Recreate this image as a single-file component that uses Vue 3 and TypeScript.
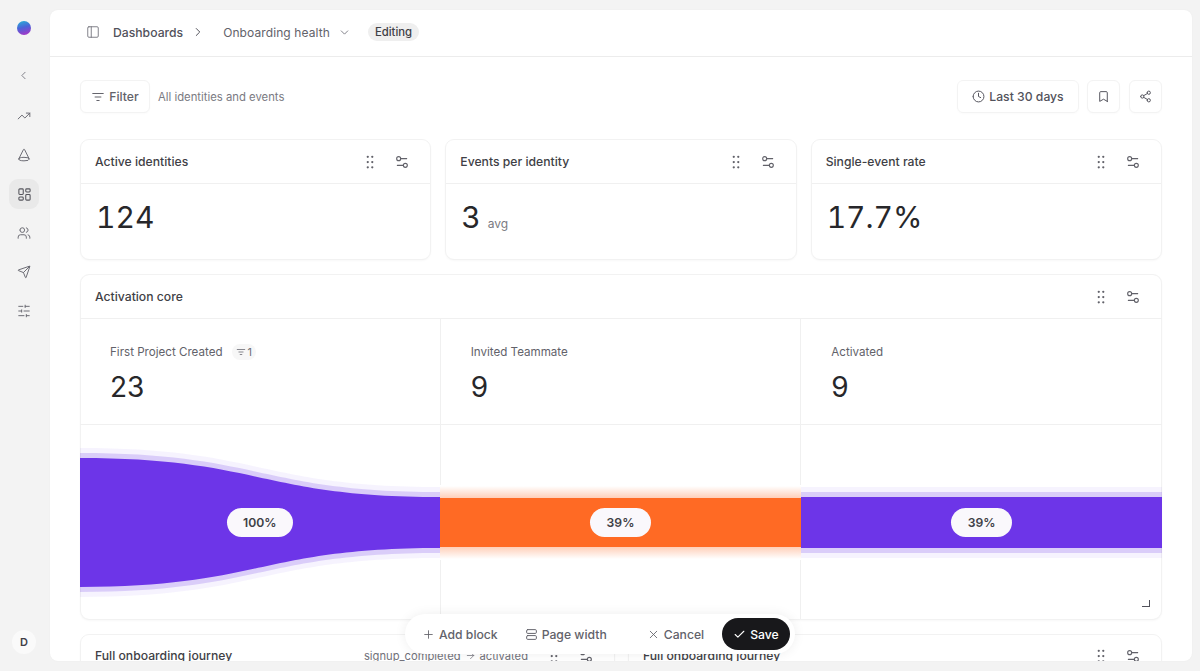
<script setup lang="ts">
import { h } from 'vue';

const box = (x: number, y: number, w: number, h2: number, r = 1.5) =>
    `M${x + r} ${y}h${w - 2 * r}a${r} ${r} 0 0 1 ${r} ${r}v${h2 - 2 * r}a${r} ${r} 0 0 1-${r} ${r}h-${w - 2 * r}a${r} ${r} 0 0 1-${r}-${r}v-${h2 - 2 * r}a${r} ${r} 0 0 1 ${r}-${r}z`;
const circle = (cx: number, cy: number, r: number) =>
    `M${cx - r} ${cy}a${r} ${r} 0 1 0 ${2 * r} 0a${r} ${r} 0 1 0-${2 * r} 0`;

const icons: Record<string, string[]> = {
    panel: [box(3, 3, 18, 18, 2), 'M9 3v18'],
    right: ['m9 18 6-6-6-6'],
    down: ['m6 9 6 6 6-6'],
    left: ['m15 18-6-6 6-6'],
    trend: ['M22 7 13.5 15.5 8.5 10.5 2 17', 'M16 7h6v6'],
    cone: ['m20.9 18.55-8-15.98a1 1 0 0 0-1.8 0l-8 15.98', 'M3 19a9 3 0 1 0 18 0a9 3 0 1 0-18 0'],
    dash: [box(3, 3, 7, 9), box(14, 3, 7, 5), box(14, 12, 7, 9), box(3, 16, 7, 5)],
    users: ['M16 21v-2a4 4 0 0 0-4-4H6a4 4 0 0 0-4 4v2', circle(9, 7, 4), 'M22 21v-2a4 4 0 0 0-3-3.87', 'M16 3.13a4 4 0 0 1 0 7.75'],
    send: ['M14.536 21.686a.5.5 0 0 0 .937-.024l6.5-19a.496.496 0 0 0-.635-.635l-19 6.5a.5.5 0 0 0-.024.937l7.93 3.18a2 2 0 0 1 1.112 1.11z', 'm21.854 2.147-10.94 10.939'],
    tune: ['M21 4h-7', 'M10 4H3', 'M21 12h-9', 'M8 12H3', 'M21 20h-5', 'M12 20H3', 'M14 2v4', 'M8 10v4', 'M16 18v4'],
    filter: ['M3 6h18', 'M7 12h10', 'M10 18h4'],
    clock: [circle(12, 12, 10), 'M12 6v6l4 2'],
    bookmark: ['m19 21-7-4-7 4V5a2 2 0 0 1 2-2h10a2 2 0 0 1 2 2v16z'],
    share: [circle(18, 5, 3), circle(6, 12, 3), circle(18, 19, 3), 'M8.59 13.51l6.83 3.98', 'M15.41 6.51l-6.82 3.98'],
    grip: ['M9 5h.01', 'M15 5h.01', 'M9 12h.01', 'M15 12h.01', 'M9 19h.01', 'M15 19h.01'],
    settings: ['M14 17H5', 'M19 7h-9', circle(17, 17, 3), circle(7, 7, 3)],
    plus: ['M5 12h14', 'M12 5v14'],
    rows: [box(3, 3, 18, 7, 2), box(3, 14, 18, 7, 2)],
    close: ['M18 6 6 18', 'm6 6 12 12'],
    check: ['M20 6 9 17l-5-5'],
    arrow: ['M5 12h14', 'm12 5 7 7-7 7'],
};

const Icon = (props: { name: string; size?: number; weight?: number }) =>
    h(
        'svg',
        {
            width: props.size ?? 14,
            height: props.size ?? 14,
            viewBox: '0 0 24 24',
            fill: 'none',
            stroke: 'currentColor',
            'stroke-width': props.weight ?? 2,
            'stroke-linecap': 'round',
            'stroke-linejoin': 'round',
            style: 'flex:none;display:block',
        },
        icons[props.name].map((d) => h('path', { d })),
    );

const navItems = ['trend', 'cone', 'dash', 'users', 'send', 'tune'];

const statCards = [
    { title: 'Active identities', value: '124', unit: '' },
    { title: 'Events per identity', value: '3', unit: 'avg' },
    { title: 'Single-event rate', value: '17.7%', unit: '' },
];

const steps = [
    { label: 'First Project Created', value: '23', filters: 1, rate: '100%' },
    { label: 'Invited Teammate', value: '9', filters: 0, rate: '39%' },
    { label: 'Activated', value: '9', filters: 0, rate: '39%' },
];

// funnel drawn in chart coordinates, 1082 x 195
const flow = (spread: number) =>
    `M0 ${33 - spread}C180 ${33 - spread} 180 ${72 - spread} 360 ${72 - spread}H1082V${123 + spread}H360C180 ${123 + spread} 180 ${162 + spread} 0 ${162 + spread}Z`;
</script>

<template>
    <div class="shell">
        <aside class="sidebar">
            <span class="logo"></span>
            <span class="collapse"><Icon name="left" :size="13" :weight="1.6" /></span>
            <nav class="nav">
                <span v-for="item in navItems" :key="item" class="nav-item" :class="{ active: item === 'dash' }">
                    <Icon :name="item" :size="item === 'dash' ? 15 : 14" :weight="1.7" />
                </span>
            </nav>
            <span class="avatar">D</span>
        </aside>

        <main class="panel">
            <header class="topbar">
                <span class="panel-toggle"><Icon name="panel" :size="14" :weight="1.5" /></span>
                <span class="crumb">Dashboards</span>
                <span class="crumb-sep"><Icon name="right" :size="14" :weight="1.7" /></span>
                <span class="crumb-page">Onboarding health</span>
                <span class="crumb-down"><Icon name="down" :size="13" :weight="1.6" /></span>
                <span class="status">Editing</span>
            </header>

            <div class="content">
                <div class="filters">
                    <button class="btn filter-btn"><Icon name="filter" :size="14" :weight="1.7" />Filter</button>
                    <span class="filter-note">All identities and events</span>
                    <button class="btn range-btn"><Icon name="clock" :size="13" :weight="1.8" />Last 30 days</button>
                    <button class="btn square"><Icon name="bookmark" :size="13" :weight="1.8" /></button>
                    <button class="btn square"><Icon name="share" :size="13" :weight="1.8" /></button>
                </div>

                <section class="stats">
                    <article v-for="card in statCards" :key="card.title" class="card">
                        <div class="card-head">
                            <span class="card-title">{{ card.title }}</span>
                            <span class="card-tools">
                                <Icon name="grip" :size="18" :weight="3" />
                                <Icon name="settings" :size="16" :weight="1.7" />
                            </span>
                        </div>
                        <div class="stat-body">
                            <span class="stat-value">{{ card.value }}</span>
                            <span v-if="card.unit" class="stat-unit">{{ card.unit }}</span>
                        </div>
                    </article>
                </section>

                <section class="card funnel-card">
                    <div class="card-head">
                        <span class="card-title">Activation core</span>
                        <span class="card-tools">
                            <Icon name="grip" :size="18" :weight="3" />
                            <Icon name="settings" :size="16" :weight="1.7" />
                        </span>
                    </div>
                    <div class="steps">
                        <div v-for="step in steps" :key="step.label" class="step">
                            <div class="step-label">
                                {{ step.label }}
                                <span v-if="step.filters" class="step-filter"><Icon name="filter" :size="10" :weight="2" />{{ step.filters }}</span>
                            </div>
                            <div class="step-value">{{ step.value }}</div>
                        </div>
                    </div>
                    <div class="chart">
                        <svg class="chart-art" width="1082" height="195" viewBox="0 0 1082 195">
                            <defs>
                                <linearGradient id="glowTop" x1="0" y1="0" x2="0" y2="1">
                                    <stop offset="0" stop-color="#ff6a24" stop-opacity="0" />
                                    <stop offset="1" stop-color="#ff6a24" stop-opacity="0.32" />
                                </linearGradient>
                                <linearGradient id="glowBottom" x1="0" y1="0" x2="0" y2="1">
                                    <stop offset="0" stop-color="#ff6a24" stop-opacity="0.32" />
                                    <stop offset="1" stop-color="#ff6a24" stop-opacity="0" />
                                </linearGradient>
                            </defs>
                            <path :d="flow(10)" fill="#6d35e8" opacity="0.06" />
                            <path :d="flow(5)" fill="#6d35e8" opacity="0.2" />
                            <path :d="flow(0)" fill="#6d35e8" />
                            <rect x="360" y="60" width="361" height="75" fill="#fff" />
                            <rect x="360" y="61" width="361" height="12" fill="url(#glowTop)" />
                            <rect x="360" y="122" width="361" height="12" fill="url(#glowBottom)" />
                            <rect x="360" y="73" width="361" height="49" fill="#ff6a24" />
                        </svg>
                        <div v-for="step in steps" :key="step.label" class="chart-col">
                            <span class="rate">{{ step.rate }}</span>
                        </div>
                        <span class="resize"></span>
                    </div>
                </section>

                <section class="lower">
                    <article class="card lower-card">
                        <div class="card-head">
                            <span class="card-title">Full onboarding journey</span>
                            <span class="card-tools">
                                <span class="event-chip">signup_completed<Icon name="arrow" :size="11" :weight="1.6" />activated</span>
                                <Icon name="grip" :size="18" :weight="3" />
                                <Icon name="settings" :size="16" :weight="1.7" />
                            </span>
                        </div>
                    </article>
                    <article class="card lower-card">
                        <div class="card-head">
                            <span class="card-title">Full onboarding journey</span>
                            <span class="card-tools">
                                <Icon name="grip" :size="18" :weight="3" />
                                <Icon name="settings" :size="16" :weight="1.7" />
                            </span>
                        </div>
                    </article>
                </section>
            </div>

            <div class="toolbar">
                <button class="tool add"><Icon name="plus" :size="13" :weight="1.6" />Add block</button>
                <button class="tool width"><Icon name="rows" :size="13" :weight="1.8" />Page width</button>
                <button class="tool cancel"><Icon name="close" :size="13" :weight="1.6" />Cancel</button>
                <button class="save"><Icon name="check" :size="13" :weight="2" />Save</button>
            </div>
        </main>
    </div>
</template>

<style>
html,
body {
    margin: 0;
    height: 100%;
    overflow: hidden;
    background: #f3f3f3;
}
</style>

<style scoped>
.shell {
    display: flex;
    height: 671px;
    box-sizing: border-box;
    padding: 10px 8px 10px 0;
    font-family: Inter, "Liberation Sans", sans-serif;
    font-size: 12.2px;
    color: #3f3f46;
    background: #f3f3f3;
}

.sidebar {
    flex: none;
    width: 50px;
    padding-left: 9px;
    box-sizing: border-box;
    display: flex;
    flex-direction: column;
    align-items: flex-start;
}

.logo {
    width: 14px;
    height: 14px;
    margin: 11px 0 0 8px;
    border-radius: 50%;
    background: linear-gradient(165deg, #25b5d6 0%, #4a63d8 45%, #b52ec4 100%);
}

.collapse {
    margin: 34px 0 0 8px;
    height: 14px;
    color: #71717a;
}

.nav {
    display: flex;
    flex-direction: column;
    gap: 9px;
    margin-top: 18px;
}

.nav-item {
    width: 30px;
    height: 30px;
    display: flex;
    align-items: center;
    justify-content: center;
    border-radius: 9px;
    color: #6b6b73;
}

.nav-item.active {
    background: #e9e9e9;
    color: #55555c;
}

.avatar {
    margin: auto 0 7px 3px;
    width: 24px;
    height: 24px;
    border-radius: 50%;
    background: #fafafa;
    display: flex;
    align-items: center;
    justify-content: center;
    font-size: 11px;
    font-weight: 600;
    color: #3f3f46;
}

.panel {
    position: relative;
    flex: 1;
    min-width: 0;
    display: flex;
    flex-direction: column;
    background: #fff;
    border-radius: 8px;
    overflow: hidden;
    box-shadow: 0 0 2px rgba(0, 0, 0, 0.04);
}

.topbar {
    flex: none;
    height: 47px;
    box-sizing: border-box;
    display: flex;
    align-items: center;
    padding: 0 36px 2px;
    border-bottom: 1px solid #ececec;
}

.panel-toggle {
    color: #71717a;
    margin-right: 13px;
}

.crumb {
    font-weight: 500;
    color: #52525b;
}

.crumb-sep {
    margin: 0 18px 0 8px;
    color: #52525b;
}

.crumb-page {
    font-size: 12px;
    color: #62626a;
    letter-spacing: 0.1px;
}

.crumb-down {
    margin: 0 17px 0 8px;
    color: #71717a;
}

.status {
    padding: 2px 7px;
    border-radius: 10px;
    background: #efefef;
    font-size: 11.3px;
    font-weight: 500;
    color: #3f3f46;
}

.content {
    flex: 1;
    min-height: 0;
    overflow: hidden;
    padding: 23px 30px 0;
}

.filters {
    display: flex;
    align-items: center;
    height: 33px;
    margin-bottom: 26px;
}

.btn {
    height: 33px;
    box-sizing: border-box;
    display: flex;
    align-items: center;
    justify-content: center;
    gap: 4px;
    padding: 0;
    border: 1px solid #f3f3f3;
    border-radius: 6px;
    background: #fff;
    font: inherit;
    color: #52525b;
    box-shadow: 0 1px 2px rgba(0, 0, 0, 0.02);
}

.filter-btn {
    width: 70px;
    font-weight: 500;
    color: #62626a;
}

.filter-note {
    margin-left: 8px;
    font-size: 11.3px;
    color: #7a7a82;
}

.range-btn {
    width: 122px;
    margin-left: auto;
    gap: 4px;
    font-weight: 500;
    color: #52525b;
}

.square {
    width: 33px;
    margin-left: 9px;
}

.range-btn + .square {
    margin-left: 8px;
}

.stats {
    display: grid;
    grid-template-columns: repeat(3, 1fr);
    gap: 14px;
    margin-bottom: 14px;
}

.card {
    box-sizing: border-box;
    background: #fff;
    border: 1px solid #f2f2f2;
    border-radius: 9px;
    box-shadow: 0 1px 2px rgba(0, 0, 0, 0.03);
}

.card-head {
    height: 44px;
    box-sizing: border-box;
    display: flex;
    align-items: center;
    justify-content: space-between;
    padding: 0 20px 0 14px;
    border-bottom: 1px solid #f0f0f0;
}

.card-title {
    font-weight: 500;
    color: #3f3f46;
}

.card-tools {
    display: flex;
    align-items: center;
    gap: 15px;
    color: #62626a;
}

.stat-body {
    height: 75px;
    display: flex;
    align-items: baseline;
    gap: 4px;
    padding: 14px 15px 0;
    box-sizing: border-box;
}

.stat-value {
    font-size: 30px;
    line-height: 38px;
    font-variant-numeric: tabular-nums;
    color: #27272a;
}

.stat-unit {
    margin-left: 3px;
    font-size: 12px;
    color: #7a7a82;
}

/* the chart runs edge to edge, so the side lines are shadows under it */
.funnel-card {
    height: 346px;
    margin-bottom: 14px;
    overflow: hidden;
    border-width: 1px 0;
    box-shadow: inset 1px 0 #f2f2f2, inset -1px 0 #f2f2f2, 0 1px 2px rgba(0, 0, 0, 0.03);
}

.funnel-card .card-head {
    padding: 0 21px 0 15px;
}

.steps {
    display: grid;
    grid-template-columns: repeat(3, 1fr);
    height: 105px;
    border-bottom: 1px solid #f0f0f0;
}

.step {
    padding: 24px 30px 0;
    border-right: 1px solid #f0f0f0;
}

.step:last-child {
    border-right: 0;
}

.step-label {
    display: flex;
    align-items: center;
    gap: 9px;
    height: 18px;
    font-size: 11.6px;
    color: #62626a;
}

.step-filter {
    display: flex;
    align-items: center;
    gap: 2px;
    padding: 1px 4px;
    border-radius: 8px;
    background: #f7f7f7;
    font-size: 11px;
    color: #71717a;
}

.step-value {
    margin-top: 9px;
    font-size: 28px;
    line-height: 34px;
    color: #27272a;
}

.chart {
    position: relative;
    display: grid;
    grid-template-columns: repeat(3, 1fr);
    height: 195px;
}

.chart-art {
    position: absolute;
    left: 0;
    top: 0;
    z-index: 1;
}

.chart-col {
    display: flex;
    align-items: center;
    justify-content: center;
    border-right: 1px solid #f0f0f0;
}

.chart-col:last-of-type {
    border-right: 0;
}

.rate {
    position: relative;
    z-index: 2;
    height: 29px;
    display: flex;
    align-items: center;
    padding: 0 16.5px;
    border-radius: 15px;
    background: #faf8fc;
    font-weight: 600;
    color: #3f3f46;
}

.resize {
    position: absolute;
    right: 12px;
    bottom: 13px;
    width: 7px;
    height: 6px;
    border-right: 1.5px solid #52525b;
    border-bottom: 1.5px solid #52525b;
}

.lower {
    display: grid;
    grid-template-columns: 535px 1fr;
    gap: 13px;
}

.lower-card {
    height: 120px;
}

.lower-card .card-head {
    padding-bottom: 2px;
}

.event-chip {
    display: flex;
    align-items: center;
    gap: 4px;
    font-size: 11.2px;
    color: #71717a;
    margin-right: 2px;
}

.toolbar {
    position: absolute;
    left: 355px;
    bottom: 7px;
    width: 390px;
    height: 40px;
    box-sizing: border-box;
    display: flex;
    align-items: center;
    padding: 0 5px 0 17px;
    border-radius: 20px;
    background: #fff;
    box-shadow: 0 0 12px rgba(0, 0, 0, 0.07);
}

.tool {
    display: flex;
    align-items: center;
    gap: 4px;
    padding: 0;
    border: 0;
    background: none;
    font: inherit;
    font-weight: 500;
    color: #62626a;
}

.width {
    margin-left: 27px;
}

.cancel {
    margin-left: 40px;
}

.save {
    margin-left: auto;
    width: 68px;
    height: 32px;
    display: flex;
    align-items: center;
    justify-content: center;
    gap: 4px;
    padding: 0;
    border: 0;
    border-radius: 16px;
    background: #18181b;
    font: inherit;
    font-weight: 500;
    color: #fff;
}
</style>
